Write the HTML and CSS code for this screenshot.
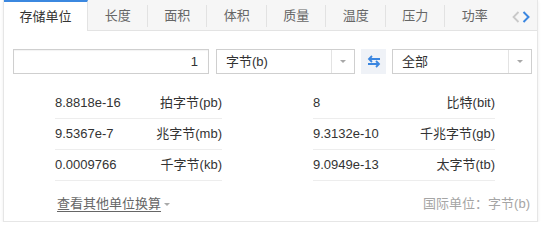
FILE: index.html
```
<!DOCTYPE html>
<html lang="zh">
<head>
<meta charset="utf-8">
<link rel="stylesheet" href="styles.css">
</head>
<body>
<div class="card">
  <div class="tabs">
    <div class="tab active">存储单位</div>
    <div class="tab">长度</div>
    <div class="tab">面积</div>
    <div class="tab">体积</div>
    <div class="tab">质量</div>
    <div class="tab">温度</div>
    <div class="tab">压力</div>
    <div class="tab last">功率</div>
    <div class="nav">
      <svg class="chev" width="8" height="12" viewBox="0 0 8 12"><path d="M6.5 1 L1.5 6 L6.5 11" fill="none" stroke="#c9c9c9" stroke-width="1.8"/></svg>
      <svg class="chev" width="8" height="12" viewBox="0 0 8 12"><path d="M1.5 1 L6.5 6 L1.5 11" fill="none" stroke="#3a86e0" stroke-width="2"/></svg>
    </div>
  </div>
  <div class="controls">
    <div class="input">1</div>
    <div class="select sel1"><span class="label">字节(b)</span><span class="arrow"><i></i></span></div>
    <div class="swap">
      <svg width="14" height="13" viewBox="0 0 14 13"><path d="M13 4 H2.5 M5 1 L2 4 L5 7" fill="none" stroke="#3a86e0" stroke-width="1.8"/><path d="M1 9 H11.5 M9 6 L12 9 L9 12" fill="none" stroke="#3a86e0" stroke-width="1.8"/></svg>
    </div>
    <div class="select sel2"><span class="label">全部</span><span class="arrow"><i></i></span></div>
  </div>
  <div class="results">
    <div class="col left">
      <div class="row"><span class="val">8.8818e-16</span><span class="unit">拍字节(pb)</span></div>
      <div class="row"><span class="val">9.5367e-7</span><span class="unit">兆字节(mb)</span></div>
      <div class="row"><span class="val">0.0009766</span><span class="unit">千字节(kb)</span></div>
    </div>
    <div class="col right">
      <div class="row"><span class="val">8</span><span class="unit">比特(bit)</span></div>
      <div class="row"><span class="val">9.3132e-10</span><span class="unit">千兆字节(gb)</span></div>
      <div class="row"><span class="val">9.0949e-13</span><span class="unit">太字节(tb)</span></div>
    </div>
  </div>
  <div class="footer">
    <span class="more"><span class="link">查看其他单位换算</span><i class="tri"></i></span>
    <span class="si">国际单位：字节(b)</span>
  </div>
</div>
</body>
</html>
```
FILE: styles.css
```
html, body {
  margin: 0;
  padding: 0;
  background: #fff;
}
body {
  font-family: "Liberation Sans", Arial, "Noto Sans CJK SC", sans-serif;
  font-size: 13px;
  color: #333;
}
.card {
  margin-left: 3px;
  width: 533px;
  height: 221px;
  border: 1px solid #e6e6e6;
  border-top: none;
  box-shadow: 0 1px 3px rgba(0,0,0,0.08);
  background: #fff;
}
.tabs {
  display: flex;
  height: 30px;
  background: #f6f6f6;
  border-bottom: 1px solid #e3e3e3;
}
.tab {
  width: 59.5px;
  height: 30px;
  line-height: 32px;
  text-align: center;
  font-size: 13px;
  color: #666;
  position: relative;
}
.tab::after {
  content: "";
  position: absolute;
  right: 0;
  top: 5px;
  height: 22px;
  border-right: 1px solid #e2e2e2;
}
.tab.last::after { display: none; }
.tab.active {
  width: 83px;
  height: 29px;
  line-height: 30px;
  background: #fff;
  color: #333;
  border-top: 2px solid #3b88e0;
  border-right: 1px solid #e3e3e3;
  margin-bottom: -1px;
}
.tab.active::after { display: none; }
.nav {
  display: flex;
  align-items: center;
  gap: 2px;
  margin-left: 7px;
  padding-top: 3px;
}
.controls {
  display: flex;
  align-items: stretch;
  margin: 18px 0 0 9px;
  height: 25px;
}
.input {
  width: 184px;
  border: 1px solid #cfcfcf;
  box-shadow: inset 0 1px 1px rgba(0,0,0,0.05);
  text-align: right;
  padding-right: 10px;
  line-height: 23px;
  font-size: 13px;
}
.select {
  display: flex;
  border: 1px solid #cfcfcf;
  margin-left: 7px;
}
.sel1 { width: 137px; }
.sel2 { width: 138px; margin-left: 6px; }
.select .label {
  flex: 1;
  padding-left: 9px;
  line-height: 23px;
}
.select .arrow {
  width: 22px;
  border-left: 1px solid #e3e3e3;
  display: flex;
  align-items: center;
  justify-content: center;
}
.select .arrow i {
  width: 0;
  height: 0;
  border-left: 3px solid transparent;
  border-right: 3px solid transparent;
  border-top: 3px solid #a8a8a8;
}
.swap {
  width: 25px;
  margin-left: 6px;
  background: #eff2f7;
  display: flex;
  align-items: center;
  justify-content: center;
}
.results {
  display: flex;
  margin: 14px 0 0 51px;
}
.col.left { width: 167px; }
.col.right { width: 182px; margin-left: 91px; }
.row {
  display: flex;
  justify-content: space-between;
  height: 30px;
  line-height: 30px;
  border-bottom: 1px solid #ededed;
}
.footer {
  display: flex;
  justify-content: space-between;
  margin: 12px 7px 0 53px;
  line-height: 22px;
}
.more {
  display: flex;
  align-items: center;
  color: #666;
}
.link {
  text-decoration: underline;
  text-underline-offset: 3px;
}
.tri {
  margin-left: 3px;
  width: 0;
  height: 0;
  border-left: 3px solid transparent;
  border-right: 3px solid transparent;
  border-top: 3px solid #aaa;
}
.si {
  color: #a5a5a5;
}
```
